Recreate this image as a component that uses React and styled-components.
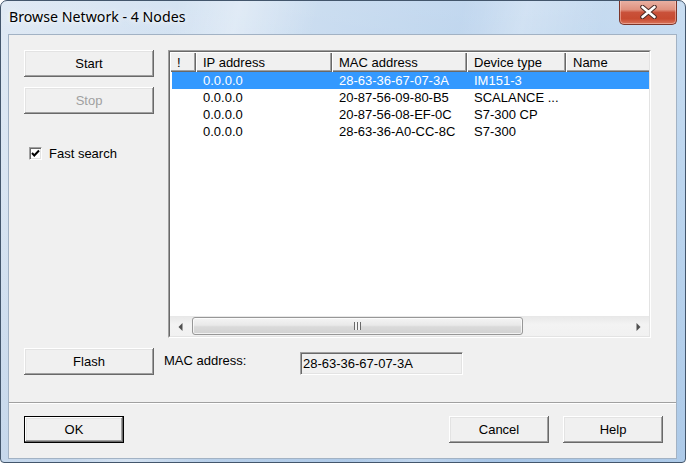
import React from 'react'
import styled, { createGlobalStyle } from 'styled-components'

const GlobalStyle = createGlobalStyle`
  html, body {
    margin: 0;
    padding: 0;
    background: #ffffff;
  }
  body {
    font-family: "Liberation Sans", Arial, sans-serif;
    font-size: 13px;
  }
`

const columns = [
  { key: 'flag', label: '!', width: 26 },
  { key: 'ip', label: 'IP address', width: 136 },
  { key: 'mac', label: 'MAC address', width: 135 },
  { key: 'type', label: 'Device type', width: 99 },
  { key: 'name', label: 'Name', width: 236 },
]

const nodes = [
  { ip: '0.0.0.0', mac: '28-63-36-67-07-3A', type: 'IM151-3', name: '' },
  { ip: '0.0.0.0', mac: '20-87-56-09-80-B5', type: 'SCALANCE ...', name: '' },
  { ip: '0.0.0.0', mac: '20-87-56-08-EF-0C', type: 'S7-300 CP', name: '' },
  { ip: '0.0.0.0', mac: '28-63-36-A0-CC-8C', type: 'S7-300', name: '' },
]

const App = () => {
  const selected = 0

  return (
    <>
      <GlobalStyle />
      <Window>
        <TitleBar>
          <Title>Browse Network - 4 Nodes</Title>
          <CloseButton aria-label="Close">
            <svg width="17" height="14" viewBox="0 0 17 14">
              <path d="M2.5 2 L14.5 12 M14.5 2 L2.5 12" stroke="#4a2a26" strokeWidth="4.6" strokeLinecap="round" />
              <path d="M2.5 2 L14.5 12 M14.5 2 L2.5 12" stroke="#ffffff" strokeWidth="2.6" strokeLinecap="round" />
            </svg>
          </CloseButton>
        </TitleBar>

        <Client>
          <Content>
            <MainRow>
              <LeftColumn>
                <Button>Start</Button>
                <Button disabled>Stop</Button>
                <CheckRow>
                  <CheckBox>
                    <svg width="9" height="9" viewBox="0 0 9 9">
                      <path d="M1 4 L3.3 6.5 L8 1.5" stroke="#000" strokeWidth="2" fill="none" />
                    </svg>
                  </CheckBox>
                  <span>Fast search</span>
                </CheckRow>
              </LeftColumn>

              <ListView>
                <ListFrame>
                  <HeaderRow>
                    {columns.map(c => (
                      <HeaderCell key={c.key} $w={c.width}>{c.label}</HeaderCell>
                    ))}
                  </HeaderRow>
                  <ListBody>
                    {nodes.map((n, i) => (
                      <Row key={n.mac} $selected={i === selected}>
                        {columns.map(c => (
                          <Cell key={c.key} $w={c.width}>{c.key === 'flag' ? '' : n[c.key]}</Cell>
                        ))}
                      </Row>
                    ))}
                  </ListBody>
                  <ScrollBar>
                    <ArrowButton>
                      <svg width="5" height="8" viewBox="0 0 5 8">
                        <polygon points="4.5,0 0.5,4 4.5,8" fill="#505050" />
                      </svg>
                    </ArrowButton>
                    <Track>
                      <Thumb>
                        <Grip />
                      </Thumb>
                    </Track>
                    <ArrowButton>
                      <svg width="5" height="8" viewBox="0 0 5 8">
                        <polygon points="0.5,0 4.5,4 0.5,8" fill="#505050" />
                      </svg>
                    </ArrowButton>
                  </ScrollBar>
                </ListFrame>
              </ListView>
            </MainRow>

            <FlashRow>
              <Button>Flash</Button>
              <FieldLabel>MAC address:</FieldLabel>
              <Field>{nodes[selected].mac}</Field>
            </FlashRow>
          </Content>

          <Separator />

          <Footer>
            <Button $w={100} $default>OK</Button>
            <Spacer />
            <Button $w={100}>Cancel</Button>
            <Button $w={100}>Help</Button>
          </Footer>
        </Client>
      </Window>
    </>
  )
}

export default App



// STYLES ––––––––––––––––––––––––– //

const Window = styled.div`
  width: 686px;
  height: 463px;
  box-sizing: border-box;
  border: 1px solid #43566c;
  border-radius: 7px 7px 4px 4px;
  padding: 0 8px 3px 7px;
  display: flex;
  flex-direction: column;
  overflow: hidden;
  background:
    linear-gradient(104deg, rgba(255,255,255,0) 22%, rgba(255,255,255,0.35) 30%, rgba(255,255,255,0) 40%, rgba(255,255,255,0) 58%, rgba(255,255,255,0.25) 66%, rgba(255,255,255,0) 76%),
    linear-gradient(to bottom, rgba(255,255,255,0.2), rgba(255,255,255,0) 40%, rgba(90,140,200,0.15)),
    linear-gradient(to right, #d9e5f2 0%, #c5d9ee 35%, #b3ceeb 70%, #bcd5ee 100%);
`

const TitleBar = styled.div`
  height: 33px;
  display: flex;
  align-items: flex-start;
  justify-content: space-between;
`

const Title = styled.div`
  margin: 6px 0 0 1px;
  font-family: "Noto Sans", "Open Sans", sans-serif;
  font-size: 14.2px;
  line-height: 20px;
  color: #000;
  text-shadow: 0 0 8px rgba(255,255,255,0.9), 0 0 4px rgba(255,255,255,0.8);
`

const CloseButton = styled.div`
  width: 58px;
  height: 25px;
  margin-top: -1px;
  box-sizing: border-box;
  display: flex;
  align-items: center;
  justify-content: center;
  border: 1px solid #7c3529;
  border-top: none;
  border-radius: 0 0 5px 5px;
  background: linear-gradient(to bottom, #eab3a6 0%, #e0927f 40%, #c9513a 52%, #c74a30 78%, #d9735a 100%);
  box-shadow: inset 0 0 0 1px rgba(255, 220, 210, 0.45);
`

const Client = styled.div`
  border: 1px solid #a2b2c4;
  background: #f0f0f0;
  display: flex;
  flex-direction: column;
`

const Content = styled.div`
  padding: 15px 13px 0 15px;
`

const MainRow = styled.div`
  display: flex;
  gap: 14px;
`

const LeftColumn = styled.div`
  width: 130px;
  display: flex;
  flex-direction: column;
  gap: 10px;
`

const Button = styled.button`
  width: ${p => p.$w || 130}px;
  height: 27px;
  flex: none;
  padding: 0;
  box-sizing: border-box;
  font: 13px "Liberation Sans", Arial, sans-serif;
  color: ${p => (p.disabled ? '#a0a0a0' : '#000')};
  background: #f0f0f0;
  border: ${p => (p.$default ? '1px solid #000' : 'none')};
  box-shadow: inset -1px -1px #696969, inset 1px 1px #fff, inset -2px -2px #a0a0a0, inset 2px 2px #e3e3e3;
`

const CheckRow = styled.label`
  display: flex;
  align-items: center;
  gap: 7px;
  margin: 22px 0 0 5px;
  color: #000;
`

const CheckBox = styled.span`
  width: 13px;
  height: 13px;
  box-sizing: border-box;
  display: flex;
  align-items: center;
  justify-content: center;
  background: #fff;
  border-style: solid;
  border-width: 1px;
  border-color: #a0a0a0 #fff #fff #a0a0a0;
  box-shadow: inset 1px 1px #696969, inset -1px -1px #e3e3e3;
`

const ListView = styled.div`
  width: 483px;
  height: 288px;
  box-sizing: border-box;
  border-style: solid;
  border-width: 1px;
  border-color: #a0a0a0 #fff #fff #a0a0a0;
`

const ListFrame = styled.div`
  height: 100%;
  box-sizing: border-box;
  border-style: solid;
  border-width: 1px;
  border-color: #696969 #e3e3e3 #e3e3e3 #696969;
  background: #fff;
  display: flex;
  flex-direction: column;
  overflow: hidden;
`

const HeaderRow = styled.div`
  display: flex;
  height: 20px;
  flex: none;
`

const HeaderCell = styled.div`
  width: ${p => p.$w}px;
  flex: none;
  box-sizing: border-box;
  padding-left: 6px;
  line-height: 19px;
  background: #f0f0f0;
  border-top: 1px solid #fff;
  border-left: 1px solid #fff;
  box-shadow: inset -1px -1px #696969, inset -2px -2px #a0a0a0;
  color: #000;
  white-space: nowrap;
`

const ListBody = styled.div`
  flex: 1;
`

const Row = styled.div`
  display: flex;
  height: 17px;
  line-height: 17px;
  background: ${p => (p.$selected ? '#3399ff' : 'transparent')};
  box-shadow: inset 2px 0 #fff;
  color: ${p => (p.$selected ? '#fff' : '#000')};
`

const Cell = styled.div`
  width: ${p => p.$w}px;
  flex: none;
  box-sizing: border-box;
  padding-left: 7px;
  white-space: nowrap;
`

const ScrollBar = styled.div`
  height: 20px;
  flex: none;
  display: flex;
  background: linear-gradient(to bottom, #e9e9e9, #f3f3f3 40%, #f1f1f1);
  border-top: 1px solid #e8e8e8;
  box-sizing: border-box;
`

const ArrowButton = styled.div`
  width: 21px;
  display: flex;
  align-items: center;
  justify-content: center;
`

const Track = styled.div`
  flex: 1;
  display: flex;
  align-items: stretch;
  padding: 0 0 1px 1px;
`

const Thumb = styled.div`
  width: 331px;
  box-sizing: border-box;
  border: 1px solid #979797;
  border-radius: 3px;
  background: linear-gradient(to bottom, #f4f4f4 0%, #e9e9e9 45%, #dadada 55%, #d2d2d2 100%);
  box-shadow: inset 0 0 0 1px rgba(255,255,255,0.7);
  display: flex;
  align-items: center;
  justify-content: center;
`

const Grip = styled.span`
  width: 7px;
  height: 8px;
  background: repeating-linear-gradient(to right, #6a6a6a 0 1px, #f3f3f3 1px 3px);
`

const FlashRow = styled.div`
  display: flex;
  align-items: flex-start;
  margin-top: 10px;
`

const FieldLabel = styled.div`
  width: 136px;
  margin: 5px 0 0 10px;
  color: #000;
`

const Field = styled.div`
  width: 163px;
  height: 23px;
  margin-top: 4px;
  box-sizing: border-box;
  padding-left: 2px;
  line-height: 22px;
  background: #f0f0f0;
  border-style: solid;
  border-width: 1px;
  border-color: #a0a0a0 #fff #fff #a0a0a0;
  box-shadow: inset 1px 1px #696969, inset -1px -1px #e3e3e3;
  color: #000;
`

const Separator = styled.div`
  margin-top: 27px;
  height: 0;
  border-top: 1px solid #a0a0a0;
  border-bottom: 1px solid #fff;
`

const Footer = styled.div`
  display: flex;
  gap: 14px;
  padding: 12px 13px 15px 15px;
`

const Spacer = styled.div`
  flex: 1;
`
